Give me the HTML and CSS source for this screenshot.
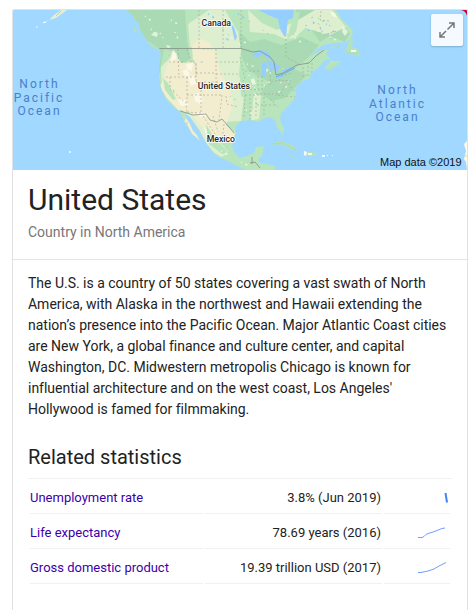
FILE: index.html
```html
<!DOCTYPE html>
<html lang="en">
<head>
<meta charset="utf-8">
<title>United States</title>
<link rel="stylesheet" href="styles.css">
</head>
<body>
<main class="card">
  <section class="map">
    <svg class="map-art" viewBox="13 10 454 160" width="454" height="160" aria-label="Map of North America">
      <defs>
        <clipPath id="land"><path d="M126 10L133 16 135 20 139 24 141 32 147 40 154 45 160 49 161 57 159 66 159 76 160 84 162 91 166 99 172 106 178 110 181 114 184 121 188 126 192 134 197 138 200 141 197 135 193 131 190 124 187 119 185 113 190 117 195 124 200 131 204 139 207 144 211 149 214 154 221 158 230 162 237 166 246 170 275 170 275 166 267 164 260 163 258 159 262 156 264 146 256 147 254 153 247 156 240 158 234 152 232 144 236 134 235 127 241 121 250 120 258 122 263 119 269 117 275 120 277 127 283 135 284 129 280 120 281 113 288 106 294 100 296 93 295 88 302 81 309 79 311 73 319 67 325 60 332 59 329 64 325 67 326 70 340 61 333 61 329 58 326 53 329 50 322 50 312 55 308 57 316 50 323 45 335 43 346 42 352 36 353 31 348 25 342 20 336 10Z"/></clipPath>
      </defs>
      <rect x="13" y="10" width="454" height="160" fill="#a0d8ff"/>
      <g clip-path="url(#land)">
        <rect x="120" y="10" width="240" height="160" fill="#b9e5bd"/>
        <path fill="#a9dab3" d="M120 10H185L187 40 190 58 183 66 175 52 164 49 159 76 150 76 120 40ZM240 32L250 42 264 39 281 45 301 37 319 45 308 58 294 69 307 75 285 98 272 101 260 94 269 82 248 70 238 50ZM296 10H326L350 33 345 42 330 36 320 42 310 28 295 25Z"/>
        <path fill="#deefcf" d="M188 24L209 10H225L238 32 241 50 239 75 244 95 241 121 220 122 212 98 203 49 190 47ZM248 10L262 23 277 30 298 20 315 10H332L346 27 330 35 305 28 295 38 285 39 274 34 250 32ZM161 67L174 54 182 66 170 92 162 91ZM254 93L261 96 259 119 251 120ZM185 113L196 112 214 136 230 153 221 157 203 145Z"/>
        <path fill="#f3edcf" d="M166 69L173 50 181 63 193 62 192 46 199 38 210 43 216 54 220 72 230 88 233 104 226 125 235 133 232 143 213 139 202 127 190 112 178 110 166 97 160 86 164 79ZM186 118L192 126 200 141 196 140 184 122Z"/>
        <path fill="#b9e5bd" d="M163 78L168 83 176 99 173 100 165 90ZM206 124L213 136 229 153 222 154 208 143ZM240 80L252 90 249 101 241 96ZM282 14L292 21 287 39 296 32 300 12Z"/>
        <path class="highland" d="M173 50l4 4-1 5-3 1-3 4 2-8zM186 64l7-1-1 8-5-2zM188 77l7-2 1 9-5 2zM194 94l5-1 4 7-3 4-5-3zM178 100l6-1 5 6-8 1zM197 112l8 1 4 3-9 1zM182 71l5-2 3 6-4 2zM204 127l3 4 1 7-2-1zM151 35l3-3 4 1-1 4zM166 45l5 1-3 3zM343 26l5 6-3 4-3-4zM330 11l5 2 2 5-5-2zM250 80l4-2 2 6-3 1zM264 67l5 3-4 3z"/>
        <g class="specks specks-green">
          <path d="M165 60l8-9M170 86l8 10M187 43l8 22M218 137l12 17M230 96l8 6M246 85l12-12M258 84l12-10M269 105l13-12M252 108l12-11M242 115l11-6M287 35l16-2M312 35l20 4M318 18l14 9M263 30l13 10M219 25l12 13M148 22l13 12M166 18l14 19M255 48l16 6M282 52l17 9"/>
        </g>
        <g class="specks specks-light">
          <path d="M145 16l9 7M151 29l5 4M160 33l3 5M171 20l8 5M175 32l4 9M226 36l9 3M239 44l8-2M247 64l11 4M249 75l7 15M257 89l-3 14M264 86l10-7M274 95l8-5M281 83l-5-7M270 73l17-5M288 81l-3 9M246 110l8 5M221 151l12 5M219 142l14-4M216 132l-7-4M241 162l10 5M189 91l10 9M175 64l9 8M200 69l12 14M207 90l10 16M318 31l18 9M295 38l10 7M184 111l9 6M173 103l12 4"/>
        </g>
        <path class="water" d="M257 9L268 15 278 19 280 29 284 36 286 37 287 27 288 20 293 18 294 9ZM231 24l3 3 3 10-2 4-2-8zM252 55l8-5 8 2 4 7-5-1-5-4-5 4zM262 64l4-3 1 4-2 13-3-2zM267 60l8 3 5 3-3 7-4-4-2 4zM275 77l8-2 1 2-7 2zM281 70l11-3 1 2-10 4zM225 38l4 1-1 2zM200 62l3-1-1 2z"/>
        <g class="specks specks-water"><path d="M238 14l14 9M208 14l8 5M306 25l3 6M312 17l2 7M326 24l5 2M328 34l6-3M306 42l4-2M320 29l3-2"/></g>
        <g class="states">
          <path d="M169 62H183M178 49L179 77M166 77H196M187 49L191 62 196 63 196 75M170 77V89L186 103 187 111M187 77V103M196 82H219M201 82V112M196 73H216M187 95H222M196 63V82M203 49L212 49M216 49V90M216 62H238M216 74H240M218 86H242M187 112 201 113M222 95L219 120M226 96L227 104 238 107M240 57L245 79 241 83 245 94M245 71H260M245 95H261M245 95L244 118M258 76V91M262 76V90M270 75V86M250 98V120M256 98V118M264 97V116M246 89L261 90 270 82 281 80M256 94H280M257 105H276M270 99L279 108M278 80L291 81M281 76L292 73M303 67V79M308 62V78M312 63V74M286 80L294 91M285 85L280 96M274 95L296 97M199 10V48M223 10V48M241 10V48M286 39V57L299 64M318 23L324 35 337 31M329 21L320 20 321 10M176 116L188 124M203 116L215 134M213 116L218 132M224 124L222 141"/>
        </g>
        <g class="frontiers"><path d="M159 48.500H241L253 52 260 51 270 57 274 62 276 75 283 73 297 65 309 63 317 55 324 50M180 111L193 115 206 114 210 120 217 122 222 119 229 127 234 133M250 163l5-1 5 6M252 157v7M262 162l10 2"/></g>
        <path fill="none" stroke="#65acea" d="M276 77L283 74 295 68"/>
      </g>
      <g fill="#b5e2b8">
        <path d="M350 38L354 41 351 46 358 49 360 56 352 54 345 54 347 46ZM326 68L335 64 342 60 338 65 328 71Z"/>
        <path d="M272 144.500L277 141.500 284 142 291 145 299 150.500 291 150 288 147 281 144.500ZM303 151L312 152 318 155 311 156.500 303 155ZM290 156l5 .5-3 1ZM322 155l4 1-4 1zM134 26l3 5-1 2-2-3zM148 41l11 8-3 1-8-7zM330 46l7 1-3 1z"/>
      </g>
      <path fill="#e7eed7" d="M43 22L49 20 54 15 61 10H67L56 18 49 20 44 23Z"/>
      <path fill="none" stroke="#a9daad" d="M56 16L61 11M273 144l10-1 13 7M346 53l12 0M337 48l3-3"/>
      <path fill="#f4fbff" d="M36 26l2 1-1 1-1-1zM69 151h1.5v2H69zM43 22h3v1h-3zM304 151l3 1-1 4-2-1zM308 153h4v2h-4zM322 155h3v2h-3zM327 155h1v1h-1zM332 155h1v1h-1zM351 50h5v2h-5z"/>
      <path fill="#fff9e8" d="M467 141L464 144 466 151 464 159 466 162 467 170Z"/>
      <path stroke="#d5d4b3" d="M464 156H467M465 166H467"/>
      <path fill="#d1002c" d="M461 10H467V16Q466 11 461 10Z"/>
      <g class="ocean">
        <text x="39.5" y="88">North</text><text x="39" y="102">Pacific</text><text x="39.5" y="115">Ocean</text>
        <text x="397.5" y="94.200">North</text><text x="397.500" y="108">Atlantic</text><text x="397.5" y="121">Ocean</text>
      </g>
      <g class="country">
        <text x="216.300" y="26">Canada</text><text x="223.900" y="89">United States</text><text x="220.900" y="142">Mexico</text>
      </g>
      <text class="credit" x="461.500" y="165.500">Map data ©2019</text>
    </svg>
    <button class="expand" aria-label="Expand map">
      <svg viewBox="0 0 32 32" width="32" height="32"><path d="M18 9h5v5M23 9l-6.500 6.500M9 18v5h5M9 23l6-6"/></svg>
    </button>
  </section>
  <header class="heading">
    <h1>United States</h1>
    <p>Country in North America</p>
  </header>
  <p class="description">The U.S. is a country of 50 states covering a vast swath of North<br>America, with Alaska in the northwest and Hawaii extending the<br>nation’s presence into the Pacific Ocean. Major Atlantic Coast cities<br>are New York, a global finance and culture center, and capital<br>Washington, DC. Midwestern metropolis Chicago is known for<br>influential architecture and on the west coast, Los Angeles'<br>Hollywood is famed for filmmaking.</p>
  <section class="stats">
    <h2>Related statistics</h2>
    <div class="rows">
      <div class="row"><a>Unemployment rate</a><span>3.8% (Jun 2019)</span><i><svg viewBox="0 0 66 34" width="66" height="34"><path class="thick" d="M61.500 14L63 23.500"/></svg></i></div>
      <div class="row"><a>Life expectancy</a><span>78.69 years (2016)</span><i><svg viewBox="0 0 66 34" width="66" height="34"><path d="M34 23.500H38L40 22.500 42 20.500 44 19.500 49 18 53 16.500 58 14.500 61 14"/></svg></i></div>
      <div class="row"><a>Gross domestic product</a><span>19.39 trillion USD (2017)</span><i><svg viewBox="0 0 66 34" width="66" height="34"><path d="M34 23.500H37L44 22 50 20 55 17 62 13.500"/></svg></i></div>
    </div>
  </section>
</main>
</body>
</html>
```
FILE: styles.css
```css
* { box-sizing: border-box; }
body { margin: 0; background: #fff; font-family: Roboto, sans-serif; color: #222; }
.card { width: 456px; height: 601px; margin: 9px 0 0 12px; border: 1px solid #dfe1e5; border-bottom: 0; border-radius: 2px 2px 0 0; overflow: hidden; }
.map { position: relative; height: 160px; }
.map-art { display: block; }
.water { fill: #96ceff; }
.highland { fill: #fffef5; opacity: .65; }
.specks { fill: none; stroke-width: 1.500; stroke-dasharray: 1 4 2 6; }
.specks-green { stroke: #ade0ae; }
.specks-light { stroke: #edf6d8; }
.specks-water { stroke: #82c8f8; }
.states { fill: none; stroke: #a4a69b; stroke-width: .6; stroke-dasharray: 2 2; }
.frontiers { fill: none; stroke: #879187; stroke-width: .8; }
.ocean { fill: #4a80ca; font-size: 12px; letter-spacing: 2px; text-anchor: middle; }
.country { fill: #252525; stroke: #fff; stroke-width: 1.500px; paint-order: stroke; font-size: 8.700px; font-weight: 500; text-anchor: middle; }
.credit { font: 11px "Liberation Sans", sans-serif; fill: #111; text-anchor: end; }
.expand { position: absolute; top: 4px; right: 4px; width: 32px; height: 32px; padding: 0; border: 0; border-radius: 2px; background: #f4faff; box-shadow: 0 1px 2px #0003; }
.expand svg { display: block; fill: none; stroke: #777; stroke-width: 1.500; }
.heading { height: 90px; padding: 11px 15px 0; border-bottom: 1px solid #e5e5e5; }
h1, h2, p { margin: 0; font-weight: 400; }
h1 { font-size: 30px; line-height: 38px; }
.heading p { margin-top: 3px; font-size: 14px; line-height: 21px; color: #777; }
.description { padding: 13px 0 0 15px; font-size: 14px; line-height: 21px; letter-spacing: -.01px; white-space: nowrap; }
.stats { padding: 23px 15px 0; }
h2 { width: 424px; height: 35px; font-size: 20px; line-height: 28px; }
.rows { width: 424px; border-top: 1px solid #f1f1f1; padding: 0 2px; }
.row { display: grid; grid-template-columns: 173px 177px 66px; gap: 2px; height: 35px; font-size: 13px; line-height: 38px; }
.row > * { height: 35px; border-bottom: 1px solid #f1f1f1; }
.row a { color: #3c00aa; }
.row span { text-align: right; padding-right: 1px; }
.row i svg { display: block; fill: none; stroke: #719dff; }
.row .thick { stroke: #4285f4; stroke-width: 2; }
```
